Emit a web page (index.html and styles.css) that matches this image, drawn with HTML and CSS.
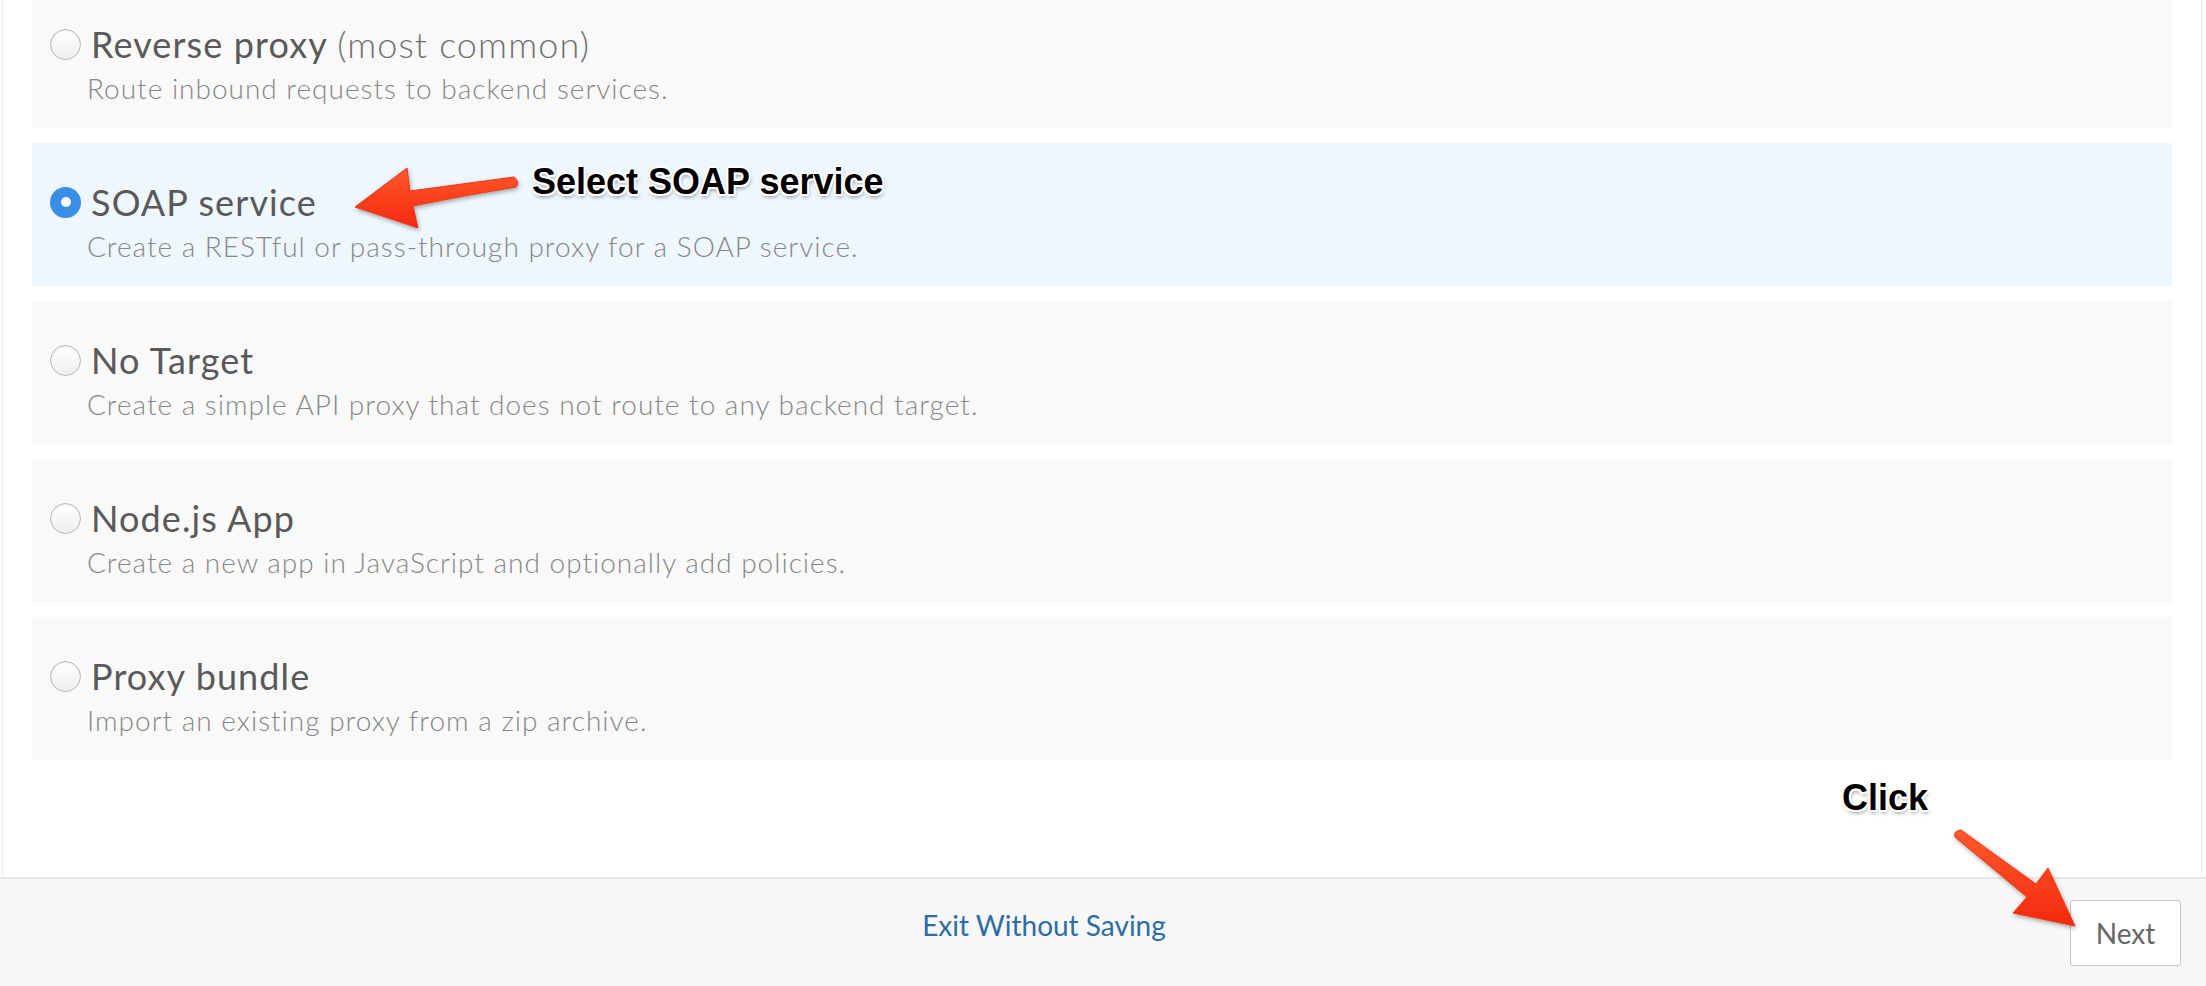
FILE: index.html
```html
<!DOCTYPE html>
<html lang="en">
<head>
<meta charset="utf-8">
<title>Build a Proxy</title>
<link rel="stylesheet" href="styles.css">
</head>
<body>
<div class="page">
  <main class="panel">
    <ul class="options">
      <li class="option">
        <div class="option-head"><span class="radio"></span><span class="title">Reverse proxy <span class="note">(most common)</span></span></div>
        <p class="desc">Route inbound requests to backend services.</p>
      </li>
      <li class="option selected">
        <div class="option-head"><span class="radio checked"></span><span class="title">SOAP service</span></div>
        <p class="desc">Create a RESTful or pass-through proxy for a SOAP service.</p>
      </li>
      <li class="option">
        <div class="option-head"><span class="radio"></span><span class="title">No Target</span></div>
        <p class="desc">Create a simple API proxy that does not route to any backend target.</p>
      </li>
      <li class="option">
        <div class="option-head"><span class="radio"></span><span class="title">Node.js App</span></div>
        <p class="desc">Create a new app in JavaScript and optionally add policies.</p>
      </li>
      <li class="option">
        <div class="option-head"><span class="radio"></span><span class="title">Proxy bundle</span></div>
        <p class="desc">Import an existing proxy from a zip archive.</p>
      </li>
    </ul>
  </main>
  <footer class="footer">
    <a class="exit" href="#">Exit Without Saving</a>
    <button class="next" type="button">Next</button>
  </footer>

  <div class="callout callout-select">Select SOAP service</div>
  <div class="callout callout-click">Click</div>
  <svg class="arrows" width="2206" height="986" viewBox="0 0 2206 986" xmlns="http://www.w3.org/2000/svg">
    <defs>
      <linearGradient id="ag" x1="0" y1="0" x2="0" y2="1">
        <stop offset="0" stop-color="#ff5a2e"/>
        <stop offset="1" stop-color="#f2280c"/>
      </linearGradient>
      <filter id="sh" x="-20%" y="-20%" width="140%" height="140%">
        <feDropShadow dx="1" dy="2" stdDeviation="2" flood-color="#000" flood-opacity="0.35"/>
      </filter>
    </defs>
    <path d="M514 177 Q462 184 410 191 L407 168 L355 207 L418 228 L413 206 Q466 195 516 187 Q520 182 514 177 Z" fill="url(#ag)" filter="url(#sh)" stroke="#f2351a" stroke-width="1" stroke-linejoin="round"/>
    <path d="M1961 830 L2036 884 L2048 868 L2075 926 L2013 913 L2027 897 L1955 837 Q1953 831 1961 830 Z" fill="url(#ag)" filter="url(#sh)" stroke="#f2351a" stroke-width="1" stroke-linejoin="round"/>
  </svg>
</div>
</body>
</html>
```

FILE: styles.css
```css
html, body {
  margin: 0;
  padding: 0;
  background: #ffffff;
}

body {
  font-family: "Lato", "Open Sans", "Liberation Sans", sans-serif;
  color: #5a5a5a;
}

.page {
  position: relative;
  width: 2206px;
  height: 986px;
  display: flex;
  flex-direction: column;
  overflow: hidden;
}

.panel {
  flex: 1;
  margin: 0 4px 0 2px;
  background: #ffffff;
  border-left: 1px solid #ececec;
  border-right: 1px solid #ececec;
  box-shadow: 0 0 3px rgba(0, 0, 0, 0.05);
  padding: 0 29px 0 29px;
}

.options {
  list-style: none;
  margin: -15px 0 0 0;
  padding: 0;
  display: flex;
  flex-direction: column;
  gap: 15px;
}

.option {
  height: 143px;
  box-sizing: border-box;
  background: #f9f9f9;
  padding: 38px 0 0 18px;
}

.option.selected {
  background: #eef6fe;
}

.option-head {
  display: flex;
  align-items: center;
  height: 42px;
}

.radio {
  width: 31px;
  height: 31px;
  border-radius: 50%;
  box-sizing: border-box;
  border: 1px solid #b8b8b8;
  background: linear-gradient(#ffffff, #eeeeee);
  box-shadow: inset 0 1px 2px rgba(0, 0, 0, 0.08);
  margin-right: 10px;
  flex: none;
  display: flex;
  align-items: center;
  justify-content: center;
}

.radio.checked {
  border: none;
  background: #3a8ee6;
  box-shadow: none;
}

.radio.checked::after {
  content: "";
  width: 10px;
  height: 10px;
  border-radius: 50%;
  background: #ffffff;
}

.title {
  font-size: 36px;
  line-height: 42px;
  font-weight: 400;
  letter-spacing: 1.1px;
  color: #595959;
  white-space: nowrap;
}

.note {
  font-weight: 300;
  color: #707070;
}

.desc {
  margin: 6px 0 0 37px;
  font-size: 28px;
  line-height: 34px;
  font-weight: 300;
  letter-spacing: 1px;
  color: #878787;
  white-space: nowrap;
}

.footer {
  height: 109px;
  box-sizing: border-box;
  flex: none;
  background: #f7f7f7;
  border-top: 2px solid #e7e7e7;
  display: flex;
  align-items: center;
  padding: 0 25px 0 18px;
}

.exit {
  flex: 1;
  text-align: center;
  font-size: 28px;
  color: #2e6da4;
  text-decoration: none;
  margin-top: -16px;
}

.next {
  width: 111px;
  height: 66px;
  background: #ffffff;
  border: 1px solid #c8c8c8;
  border-radius: 3px;
  font-family: "Lato", "Open Sans", sans-serif;
  font-size: 28px;
  color: #666666;
  padding: 0;
}

.callout {
  position: absolute;
  font-family: "Liberation Sans", Arial, sans-serif;
  font-weight: 700;
  font-size: 36px;
  line-height: 36px;
  color: #000000;
  white-space: nowrap;
  text-shadow:
    -2px 0 0 #fff, 2px 0 0 #fff, 0 -2px 0 #fff, 0 2px 0 #fff,
    -1.5px -1.5px 0 #fff, 1.5px -1.5px 0 #fff, -1.5px 1.5px 0 #fff, 1.5px 1.5px 0 #fff,
    1px 3px 4px rgba(0, 0, 0, 0.45);
}

.callout-select {
  left: 532px;
  top: 164px;
}

.callout-click {
  left: 1842px;
  top: 780px;
}

.arrows {
  position: absolute;
  left: 0;
  top: 0;
  pointer-events: none;
}
```
